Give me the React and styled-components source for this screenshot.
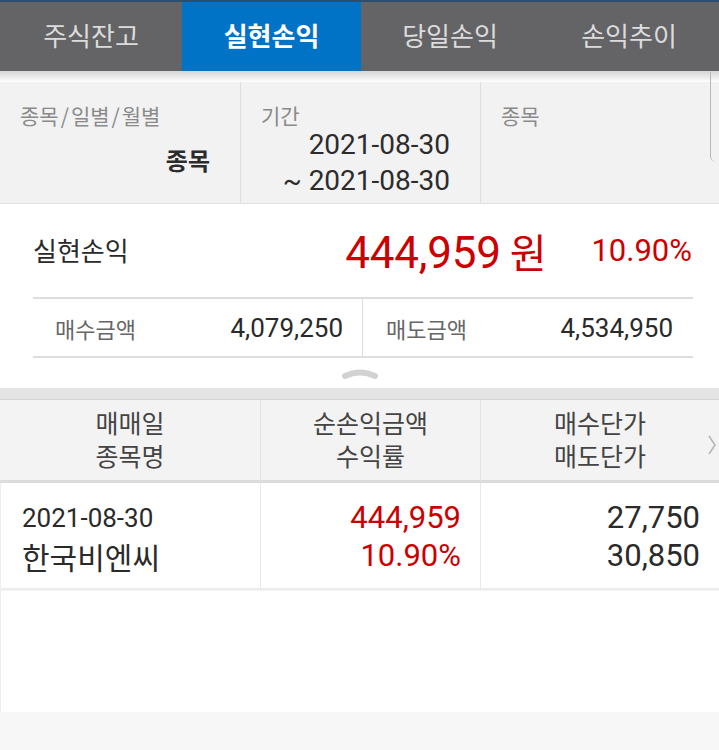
import React from "react";
import styled, { createGlobalStyle } from "styled-components";

const Global = createGlobalStyle`
  html, body { margin: 0; padding: 0; background: #f7f7f7; }
  body { font-family: Roboto, "Noto Sans CJK KR", sans-serif; }
  * { box-sizing: border-box; }
`;

const Page = styled.div`
  width: 719px;
  height: 750px;
  display: flex;
  flex-direction: column;
  background: #f7f7f7;
  position: relative;
  overflow: hidden;
`;

const TabBar = styled.div`
  display: grid;
  grid-template-columns: 182px 179px 178px 180px;
  height: 71px;
  background: #646466;
  border-top: 2px solid #2b4d6e;
`;

const Tab = styled.div`
  display: flex;
  align-items: center;
  justify-content: center;
  font-family: "Noto Sans CJK KR", Roboto, sans-serif;
  font-size: 26px;
  font-weight: ${(p) => (p.$active ? 700 : 400)};
  color: ${(p) => (p.$active ? "#ffffff" : "#dcdcdc")};
  background: ${(p) => (p.$active ? "#0073c7" : "transparent")};
  padding-bottom: 4px;
`;

const Shade = styled.div`
  height: 11px;
  background: linear-gradient(#d6d6d6, #ececec 60%, #ffffff);
`;

const Filter = styled.div`
  display: grid;
  grid-template-columns: 240px 240px 1fr;
  height: 122px;
  background: #f2f2f2;
  border-bottom: 1px solid #e2e2e2;
`;

const FilterCell = styled.div`
  display: flex;
  flex-direction: column;
  padding: 21px 30px 0 20px;
  border-left: ${(p) => (p.$first ? "none" : "1px solid #dedede")};
`;

const FilterLabel = styled.div`
  font-family: "Noto Sans CJK KR", sans-serif;
  font-size: 21px;
  line-height: 24px;
  color: #8a8a8a;
`;

const Slash = styled.span`
  margin: 0 2px;
`;

const FilterValue = styled.div`
  align-self: flex-end;
  font-family: ${(p) => (p.$num ? "Roboto, sans-serif" : '"Noto Sans CJK KR", sans-serif')};
  font-size: ${(p) => (p.$num ? "28px" : "24px")};
  font-weight: ${(p) => (p.$bold ? 700 : 400)};
  line-height: ${(p) => (p.$num ? "36px" : "30px")};
  color: #2c2c2c;
  margin-top: ${(p) => p.$mt || 0}px;
  text-align: right;
`;

const ScrollEdge = styled.div`
  position: absolute;
  right: 3px;
  top: 72px;
  width: 6px;
  height: 90px;
  border-left: 1.5px solid #b8b8b8;
  border-bottom-left-radius: 8px;
`;

const Summary = styled.div`
  background: #ffffff;
  padding: 0 27px 0 33px;
  display: flex;
  flex-direction: column;
  height: 184px;
`;

const TotalRow = styled.div`
  display: flex;
  align-items: center;
  height: 93px;
`;

const TotalLabel = styled.div`
  font-family: "Noto Sans CJK KR", sans-serif;
  font-size: 26px;
  color: #2a2a2a;
  flex: 1;
  margin-bottom: 2px;
`;

const BigAmount = styled.div`
  font-family: Roboto, "Noto Sans CJK KR", sans-serif;
  font-size: 44px;
  color: #cc0000;
  letter-spacing: -0.2px;
`;

const Won = styled.span`
  font-family: "Noto Sans CJK KR", sans-serif;
  font-size: 40px;
  margin-left: 9px;
`;

const Rate = styled.div`
  font-family: Roboto, sans-serif;
  font-size: 31px;
  color: #cc0000;
  margin-left: 45px;
`;

const StatRow = styled.div`
  display: grid;
  grid-template-columns: 329px 1fr;
  height: 61px;
  border-top: 2px solid #dddddd;
  border-bottom: 2px solid #dddddd;
  width: 660px;
`;

const Stat = styled.div`
  display: flex;
  align-items: center;
  justify-content: space-between;
  padding: 0 ${(p) => (p.$second ? 20 : 19)}px 0 ${(p) => (p.$second ? 23 : 22)}px;
  border-left: ${(p) => (p.$second ? "1px solid #dddddd" : "none")};
`;

const StatLabel = styled.span`
  font-family: "Noto Sans CJK KR", sans-serif;
  font-size: 22px;
  color: #666666;
`;

const StatValue = styled.span`
  font-family: Roboto, sans-serif;
  font-size: 26px;
  color: #2a2a2a;
`;

const Handle = styled.div`
  display: flex;
  justify-content: center;
  padding-top: 8px;
  margin-left: -33px;
  margin-right: -27px;
`;

const Band = styled.div`
  height: 12px;
  background: #e4e4e4;
  border-bottom: 1px solid #d4d4d4;
`;

const Grid = styled.div`
  display: grid;
  grid-template-columns: 260px 220px 1fr;
`;

const HeadCell = styled.div`
  height: 83px;
  background: #f3f3f3;
  border-left: ${(p) => (p.$first ? "none" : "1px solid #e2e2e2")};
  border-bottom: 3px solid #dcdcdc;
  display: flex;
  flex-direction: column;
  align-items: center;
  justify-content: center;
  font-family: "Noto Sans CJK KR", sans-serif;
  font-size: 25px;
  line-height: 33px;
  color: #444444;
  position: relative;
  padding-bottom: 3px;
`;

const Chevron = styled.div`
  position: absolute;
  right: 2px;
  top: 29px;
`;

const BodyCell = styled.div`
  height: 107px;
  background: #ffffff;
  border-left: ${(p) => (p.$first ? "1px solid #eeeeee" : "1px solid #e8e8e8")};
  border-bottom: 2px solid #ececec;
  display: flex;
  flex-direction: column;
  justify-content: center;
  align-items: ${(p) => (p.$left ? "flex-start" : "flex-end")};
  padding: 4px ${(p) => (p.$left ? 0 : 19)}px 0 ${(p) => (p.$left ? 21 : 0)}px;
  color: ${(p) => (p.$red ? "#cc0000" : "#2a2a2a")};
`;

const Cell = styled.div`
  font-family: ${(p) => (p.$kr ? '"Noto Sans CJK KR", sans-serif' : "Roboto, sans-serif")};
  font-size: ${(p) => p.$size}px;
  line-height: ${(p) => p.$lh}px;
`;

const Empty = styled.div`
  height: 122px;
  background: #ffffff;
  border-left: 1px solid #eeeeee;
  border-top: 1px solid #f4f4f4;
`;

export default function App() {
  return (
    <Page>
      <Global />
      <TabBar>
        <Tab>주식잔고</Tab>
        <Tab $active>실현손익</Tab>
        <Tab>당일손익</Tab>
        <Tab>손익추이</Tab>
      </TabBar>
      <Shade />
      <Filter>
        <FilterCell $first>
          <FilterLabel>
            종목<Slash>/</Slash>일별<Slash>/</Slash>월별
          </FilterLabel>
          <FilterValue $bold $mt={18}>종목</FilterValue>
        </FilterCell>
        <FilterCell>
          <FilterLabel>기간</FilterLabel>
          <FilterValue $num>2021-08-30</FilterValue>
          <FilterValue $num>~ 2021-08-30</FilterValue>
        </FilterCell>
        <FilterCell>
          <FilterLabel>종목</FilterLabel>
        </FilterCell>
      </Filter>
      <ScrollEdge />
      <Summary>
        <TotalRow>
          <TotalLabel>실현손익</TotalLabel>
          <BigAmount>
            444,959<Won>원</Won>
          </BigAmount>
          <Rate>10.90%</Rate>
        </TotalRow>
        <StatRow>
          <Stat>
            <StatLabel>매수금액</StatLabel>
            <StatValue>4,079,250</StatValue>
          </Stat>
          <Stat $second>
            <StatLabel>매도금액</StatLabel>
            <StatValue>4,534,950</StatValue>
          </Stat>
        </StatRow>
        <Handle>
          <svg width="40" height="14" viewBox="0 0 40 14">
            <path d="M5 10 Q20 3 35 10" stroke="#d2d2d2" strokeWidth="6" fill="none" strokeLinecap="round" />
          </svg>
        </Handle>
      </Summary>
      <Band />
      <Grid>
        <HeadCell $first>
          <span>매매일</span>
          <span>종목명</span>
        </HeadCell>
        <HeadCell>
          <span>순손익금액</span>
          <span>수익률</span>
        </HeadCell>
        <HeadCell>
          <span>매수단가</span>
          <span>매도단가</span>
          <Chevron>
            <svg width="10" height="22" viewBox="0 0 10 22">
              <path d="M2 2 L8 11 L2 20" stroke="#b4b4b4" strokeWidth="1.5" fill="none" />
            </svg>
          </Chevron>
        </HeadCell>
        <BodyCell $first $left>
          <Cell $size={26} $lh={36}>2021-08-30</Cell>
          <Cell $kr $size={30} $lh={40}>한국비엔씨</Cell>
        </BodyCell>
        <BodyCell $red>
          <Cell $size={31} $lh={36}>444,959</Cell>
          <Cell $size={31} $lh={40}>10.90%</Cell>
        </BodyCell>
        <BodyCell>
          <Cell $size={31} $lh={36}>27,750</Cell>
          <Cell $size={31} $lh={40}>30,850</Cell>
        </BodyCell>
      </Grid>
      <Empty />
    </Page>
  );
}
